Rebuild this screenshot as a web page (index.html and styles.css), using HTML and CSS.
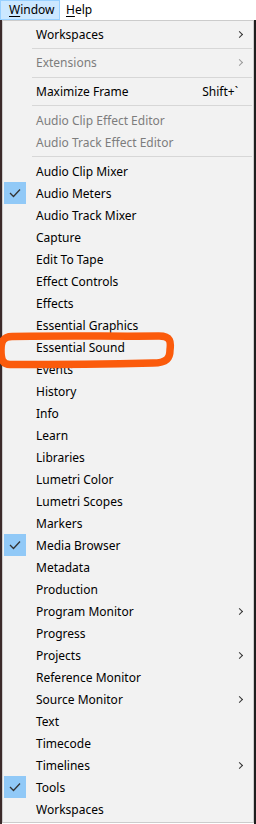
FILE: index.html
```html
<!DOCTYPE html>
<html>
<head>
<meta charset="utf-8">
<link rel="stylesheet" href="styles.css">
</head>
<body>
<div class="menubar">
  <div class="mb-item active"><u>W</u>indow</div>
  <div class="mb-item"><u>H</u>elp</div>
</div>
<div class="stage">
  <div class="menu">
    <div class="row"><span class="ico"></span><span class="label">Workspaces</span><span class="arrow"></span></div>
    <div class="sep"></div>
    <div class="row disabled"><span class="ico"></span><span class="label">Extensions</span><span class="arrow"></span></div>
    <div class="sep"></div>
    <div class="row"><span class="ico"></span><span class="label">Maximize Frame</span><span class="key">Shift+`</span></div>
    <div class="sep"></div>
    <div class="row disabled"><span class="ico"></span><span class="label">Audio Clip Effect Editor</span></div>
    <div class="row disabled"><span class="ico"></span><span class="label">Audio Track Effect Editor</span></div>
    <div class="sep"></div>
    <div class="row"><span class="ico"></span><span class="label">Audio Clip Mixer</span></div>
    <div class="row"><span class="ico checked"><svg width="12" height="10" viewBox="0 0 12 10"><polyline points="1,5 4.5,8.5 11,1.5" fill="none" stroke="#333" stroke-width="1.3"/></svg></span><span class="label">Audio Meters</span></div>
    <div class="row"><span class="ico"></span><span class="label">Audio Track Mixer</span></div>
    <div class="row"><span class="ico"></span><span class="label">Capture</span></div>
    <div class="row"><span class="ico"></span><span class="label">Edit To Tape</span></div>
    <div class="row"><span class="ico"></span><span class="label">Effect Controls</span></div>
    <div class="row"><span class="ico"></span><span class="label">Effects</span></div>
    <div class="row"><span class="ico"></span><span class="label">Essential Graphics</span></div>
    <div class="row"><span class="ico"></span><span class="label">Essential Sound</span></div>
    <div class="row"><span class="ico"></span><span class="label">Events</span></div>
    <div class="row"><span class="ico"></span><span class="label">History</span></div>
    <div class="row"><span class="ico"></span><span class="label">Info</span></div>
    <div class="row"><span class="ico"></span><span class="label">Learn</span></div>
    <div class="row"><span class="ico"></span><span class="label">Libraries</span></div>
    <div class="row"><span class="ico"></span><span class="label">Lumetri Color</span></div>
    <div class="row"><span class="ico"></span><span class="label">Lumetri Scopes</span></div>
    <div class="row"><span class="ico"></span><span class="label">Markers</span></div>
    <div class="row"><span class="ico checked"><svg width="12" height="10" viewBox="0 0 12 10"><polyline points="1,5 4.5,8.5 11,1.5" fill="none" stroke="#333" stroke-width="1.3"/></svg></span><span class="label">Media Browser</span></div>
    <div class="row"><span class="ico"></span><span class="label">Metadata</span></div>
    <div class="row"><span class="ico"></span><span class="label">Production</span></div>
    <div class="row"><span class="ico"></span><span class="label">Program Monitor</span><span class="arrow"></span></div>
    <div class="row"><span class="ico"></span><span class="label">Progress</span></div>
    <div class="row"><span class="ico"></span><span class="label">Projects</span><span class="arrow"></span></div>
    <div class="row"><span class="ico"></span><span class="label">Reference Monitor</span></div>
    <div class="row"><span class="ico"></span><span class="label">Source Monitor</span><span class="arrow"></span></div>
    <div class="row"><span class="ico"></span><span class="label">Text</span></div>
    <div class="row"><span class="ico"></span><span class="label">Timecode</span></div>
    <div class="row"><span class="ico"></span><span class="label">Timelines</span><span class="arrow"></span></div>
    <div class="row"><span class="ico checked"><svg width="12" height="10" viewBox="0 0 12 10"><polyline points="1,5 4.5,8.5 11,1.5" fill="none" stroke="#333" stroke-width="1.3"/></svg></span><span class="label">Tools</span></div>
    <div class="row"><span class="ico"></span><span class="label">Workspaces</span></div>
  </div>
</div>
<svg class="annot" width="256" height="824" viewBox="0 0 256 824">
  <path d="M 12 336.5 C 60 335.5, 120 336.5, 159 336 C 171 336, 171 342, 170 350 C 170 358, 167 363, 153 363 C 110 364, 50 364.5, 10 364.5 C 2 364.5, 1 358, 1 350 C 1 342, 3 336.5, 12 336.5 Z" fill="none" stroke="#fb5b0c" stroke-width="7.5"/>
</svg>
</body>
</html>
```

FILE: styles.css
```css
* { box-sizing: border-box; }
html, body {
  margin: 0;
  padding: 0;
  background: #ffffff;
  width: 256px;
  height: 824px;
  overflow: hidden;
  font-family: "Noto Sans", "Open Sans", sans-serif;
  font-size: 12px;
  color: #000;
}
.menubar {
  height: 20px;
  display: flex;
  align-items: stretch;
  background: #ffffff;
}
.mb-item {
  display: flex;
  align-items: center;
  padding: 0 6px 0 5px;
  line-height: 18px;
  border: 1px solid transparent;
}
.mb-item.active {
  width: 60px;
  background: #cce8ff;
  border-color: #99d1ff;
  padding-left: 8px;
}
.mb-item u { text-decoration: underline; text-underline-offset: 2px; }
.stage {
  display: flex;
  background: linear-gradient(to right, #3b2a2a 0, #3b2a2a 2px, transparent 2px, transparent 254px, #1e1e1e 254px);
  height: 804px;
  padding-left: 2px;
}
.menu {
  width: 252px;
  height: 803px;
  background: #f2f2f2;
  border: 1px solid #cccccc;
  padding: 2px 0 2px 0;
  display: flex;
  flex-direction: column;
}
.row {
  height: 22px;
  display: flex;
  align-items: center;
  padding-right: 10px;
}
.ico {
  width: 22px;
  height: 22px;
  margin-left: 1px;
  margin-right: 10px;
  flex: none;
  display: flex;
  align-items: center;
  justify-content: center;
}
.ico.checked { background: #91c9f7; }
.label { flex: 1; white-space: nowrap; }
.disabled .label { color: #7d7d7d; }
.key { white-space: nowrap; margin-right: 5px; }
.arrow {
  width: 5px;
  height: 5px;
  border-top: 1px solid #333;
  border-right: 1px solid #333;
  transform: rotate(45deg);
  margin-right: 1px;
}
.disabled .arrow { border-color: #9a9a9a; }
.sep {
  height: 7px;
  display: flex;
  align-items: center;
  margin-left: 29px;
  margin-right: 1px;
}
.sep::before {
  content: "";
  display: block;
  width: 100%;
  height: 1px;
  background: #d7d7d7;
}
.annot {
  position: absolute;
  left: 0;
  top: 0;
  pointer-events: none;
}
```
